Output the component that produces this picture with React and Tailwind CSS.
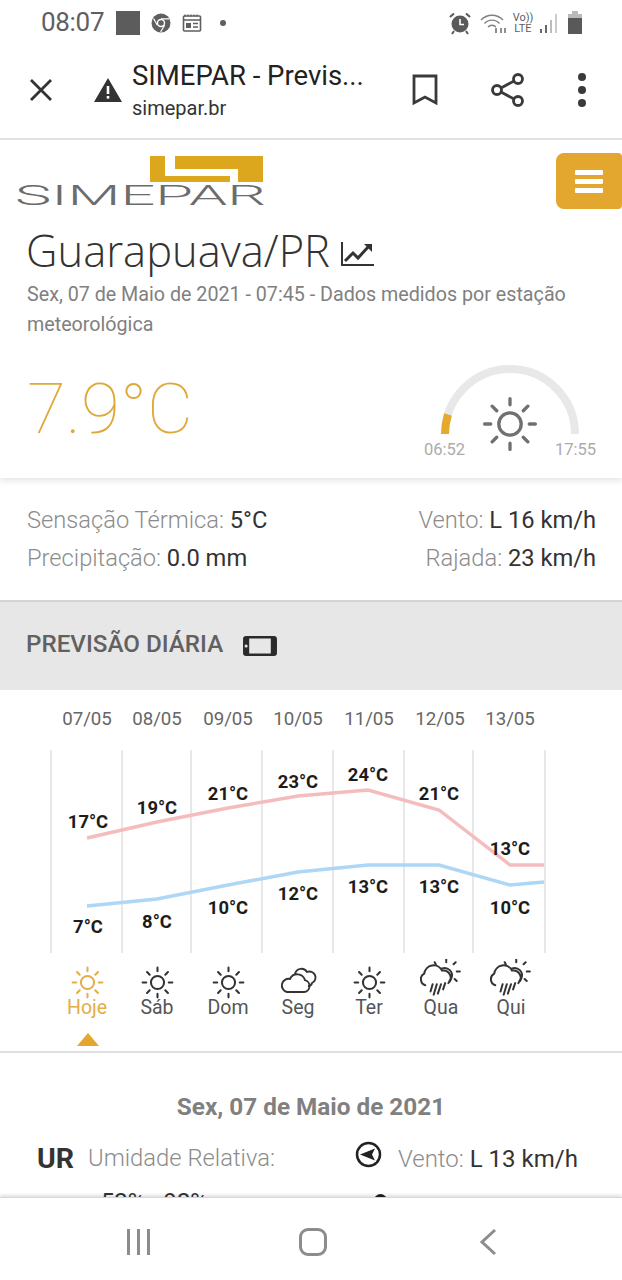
import React from 'react';

const days = [
  { d: '07/05', l: 'Hoje', icon: 'sun', x: 87 },
  { d: '08/05', l: 'Sáb', icon: 'sun', x: 157 },
  { d: '09/05', l: 'Dom', icon: 'sun', x: 228 },
  { d: '10/05', l: 'Seg', icon: 'cloud', x: 298 },
  { d: '11/05', l: 'Ter', icon: 'sun', x: 369 },
  { d: '12/05', l: 'Qua', icon: 'rain', x: 440 },
  { d: '13/05', l: 'Qui', icon: 'rain', x: 510 },
];

const highs = [
  ['17°C', 88, 828], ['19°C', 157, 814], ['21°C', 228, 800], ['23°C', 298, 788],
  ['24°C', 368, 781], ['21°C', 439, 800], ['13°C', 510, 855],
];
const lows = [
  ['7°C', 88, 933], ['8°C', 157, 928], ['10°C', 228, 914], ['12°C', 298, 900],
  ['13°C', 368, 893], ['13°C', 439, 893], ['10°C', 510, 914],
];

function Sun({ size = 41, color = '#333', stroke = 2, className = '' }) {
  return (
    <svg className={className} width={size} height={size} viewBox="0 0 40 40" fill="none" stroke={color} strokeWidth={stroke} strokeLinecap="round">
      <circle cx="20" cy="20" r="6.4" />
      <path d="M20 5.5v3.5M20 31v3.5M5.5 20H9M31 20h3.5M9.8 9.8l2.6 2.6M27.6 27.6l2.6 2.6M30.2 9.8l-2.6 2.6M12.4 27.6l-2.6 2.6" />
    </svg>
  );
}

function Cloud() {
  return (
    <svg className="translate-y-[2px]" width="40" height="40" viewBox="0 0 40 40" fill="none" stroke="#333" strokeWidth="1.9" strokeLinejoin="round">
      <path d="M9 31h17a6 6 0 0 0 1-11.8A8 8 0 0 0 12 18a6.5 6.5 0 0 0-3 13z" />
      <path d="M17 13a6.5 6.5 0 0 1 12-2a6 6 0 0 1 5 11a4 4 0 0 1-4 3" />
    </svg>
  );
}

function RainSun() {
  return (
    <svg className="translate-y-[1px]" width="44" height="42" viewBox="0 0 42 40" fill="none" stroke="#333" strokeWidth="1.9" strokeLinecap="round">
      <path d="M6 25a6 6 0 0 1-1-11a9 9 0 0 1 17-3a7 7 0 0 1 6 12" />
      <path d="M22 9a7 7 0 0 1 9 9a7 7 0 0 1-2 3" />
      <path d="M26 0v3M35 3l-2 2M39 12h-3M36 21l-2-2M15 3l1 2" />
      <path d="M13 24l-2 7M17 24l-3 10M21 24l-3 9M25 23l-2 6" />
    </svg>
  );
}

function StatusBar() {
  return (
    <div className="h-[45px] flex items-center justify-between pl-[41px] pr-[40px] text-[#5f5f5f]">
      <div className="flex items-center">
        <span className="text-[26px] w-[66px] tracking-[-0.3px]">08:07</span>
        <span className="ml-[9px] w-[24px] h-[24px] bg-[#5c5c5c]" />
        <svg className="ml-[11px]" width="20" height="20" viewBox="0 0 20 20">
          <circle cx="10" cy="10" r="9.5" fill="#5f5f5f" />
          <circle cx="10" cy="10" r="4.2" fill="#fff" />
          <circle cx="10" cy="10" r="2.8" fill="#5f5f5f" />
          <path d="M10 5.8h8M6.4 12.2L2.5 5.5M13.6 12.2L9.6 19" stroke="#fff" strokeWidth="1.2" />
        </svg>
        <svg className="ml-[11px]" width="20" height="20" viewBox="0 0 20 20" fill="none" stroke="#5f5f5f" strokeWidth="1.6">
          <rect x="1.5" y="3" width="17" height="15" rx="1" />
          <path d="M1.5 7h17M3 1.6v2M6 1.6v2M9 1.6v2M12 1.6v2M15 1.6v2" strokeWidth="1.4" />
          <rect x="4" y="10" width="5" height="5" fill="#5f5f5f" stroke="none" />
          <path d="M11 10.5h5M11 14h5" strokeWidth="1.3" />
        </svg>
        <span className="ml-[18px] w-[6px] h-[6px] rounded-full bg-[#5f5f5f]" />
      </div>
      <div className="flex items-center">
        <svg width="24" height="24" viewBox="0 0 24 24">
          <circle cx="12" cy="13" r="8.5" fill="#5a5a5a" />
          <path d="M12 8v5.5h4" stroke="#fff" strokeWidth="1.6" fill="none" />
          <path d="M2 6l4-3.5M22 6l-4-3.5M6 20l-2 3M18 20l2 3" stroke="#5a5a5a" strokeWidth="2" />
        </svg>
        <svg className="ml-[8px]" width="28" height="24" viewBox="0 0 28 24" fill="none" stroke="#808080" strokeWidth="1.4">
          <path d="M1 9a15 15 0 0 1 22 0M4.5 12.5a10 10 0 0 1 15 0M8 16a5.5 5.5 0 0 1 8 0" />
          <path d="M16 17v5M21 22v-5M25 22v-5" stroke="#606060" />
        </svg>
        <div className="ml-[4px] w-[22px] flex flex-col items-center text-[11px] leading-[11px]">
          <span>Vo))</span>
          <span>LTE</span>
        </div>
        <svg className="ml-[5px]" width="20" height="22" viewBox="0 0 20 22">
          <rect x="1" y="17" width="2" height="4" fill="#666" />
          <rect x="6" y="13" width="2" height="8" fill="#666" />
          <rect x="11" y="8" width="2" height="13" fill="#bbb" />
          <rect x="16" y="2" width="2" height="19" fill="#ccc" />
        </svg>
        <svg className="ml-[9px]" width="14" height="24" viewBox="0 0 14 24">
          <rect x="4" y="0" width="6" height="3" fill="#bbb" />
          <rect x="0" y="3" width="14" height="4" fill="#bbb" />
          <rect x="0" y="7" width="14" height="16" fill="#595959" />
        </svg>
      </div>
    </div>
  );
}

function Toolbar() {
  return (
    <div className="h-[95px] flex items-center border-b-2 border-[#e2e2e2] pb-[4px]">
      <svg className="ml-[29px]" width="24" height="24" viewBox="0 0 24 24" fill="none" stroke="#333" strokeWidth="2.8">
        <path d="M2 2l20 20M22 2L2 22" />
      </svg>
      <svg className="ml-[40px]" width="30" height="26" viewBox="0 0 30 26">
        <path d="M15 1L29 25H1z" fill="#333" />
        <rect x="13.7" y="9" width="2.6" height="8" fill="#fff" />
        <rect x="13.7" y="19" width="2.6" height="2.6" fill="#fff" />
      </svg>
      <div className="ml-[9px] w-[252px] whitespace-nowrap">
        <div className="text-[27.5px] leading-[30px] text-[#222] mt-[2px]">SIMEPAR - Previs...</div>
        <div className="text-[20px] leading-[24px] mt-[5px] text-[#333]">simepar.br</div>
      </div>
      <svg className="ml-[28px]" width="26" height="32" viewBox="0 0 26 32" fill="none" stroke="#3a3a3a" strokeWidth="2.8">
        <path d="M2 2h22v27l-11-6l-11 6z" />
      </svg>
      <svg className="ml-[53px]" width="34" height="36" viewBox="0 0 34 36" fill="none" stroke="#3a3a3a" strokeWidth="2.8">
        <circle cx="27" cy="7" r="4.5" />
        <circle cx="6" cy="18" r="4.5" />
        <circle cx="27" cy="29" r="4.5" />
        <path d="M10 16L23 9M10 20l13 7" />
      </svg>
      <div className="ml-[53px] flex flex-col gap-[5px]">
        <span className="w-[8px] h-[8px] rounded-full bg-[#3a3a3a]" />
        <span className="w-[8px] h-[8px] rounded-full bg-[#3a3a3a]" />
        <span className="w-[8px] h-[8px] rounded-full bg-[#3a3a3a]" />
      </div>
    </div>
  );
}

function Logo() {
  return (
    <svg width="250" height="58" viewBox="0 0 250 58">
      <rect x="134" y="2" width="113" height="26" fill="#dca71c" />
      <path d="M149 2h10v13h63v13h-8v-6h-65z" fill="#fff" />
      <text x="-1" y="51" textLength="251" lengthAdjust="spacingAndGlyphs" fontFamily="Roboto, sans-serif" fontWeight="300" fontSize="28" fill="#6c6c6c">SIMEPAR</text>
    </svg>
  );
}

function SunGauge() {
  return (
    <div className="relative w-[175px] h-[100px]">
      <svg width="175" height="100" viewBox="0 0 175 100" fill="none">
        <path d="M23 74A65 65 0 0 1 153 74" stroke="#e8e8e8" strokeWidth="8" />
        <path d="M23 74A65 65 0 0 1 26 54.5" stroke="#e5a92c" strokeWidth="8" />
      </svg>
      <div className="absolute left-[53px] top-[29px]">
        <Sun size={70} color="#707070" stroke={1.9} />
      </div>
      <span className="absolute left-[2px] top-[80px] text-[16.5px] leading-[20px] text-[#ababab]">06:52</span>
      <span className="absolute right-[1px] top-[80px] text-[16.5px] leading-[20px] text-[#ababab]">17:55</span>
    </div>
  );
}

function Chart() {
  const grid = [51, 122, 191, 262, 333, 404, 473, 545];
  return (
    <svg width="622" height="206" viewBox="0 750 622 206" className="block">
      {grid.map((x) => (
        <line key={x} x1={x} x2={x} y1="750" y2="953" stroke="#e0e0e0" strokeWidth="1.5" />
      ))}
      <polyline points="87,838 157,822 228,808 298,796 368,790 439,810 510,865 544,865" fill="none" stroke="#f4bcbc" strokeWidth="3.4" />
      <polyline points="87,906 157,899 228,885 298,872 368,865 439,865 510,885 544,882" fill="none" stroke="#aed6f5" strokeWidth="3.4" />
      {[...highs, ...lows].map(([t, x, y], i) => (
        <text key={i} x={x} y={y} textAnchor="middle" fontFamily="Roboto, sans-serif" fontWeight="700" fontSize="18.4" fill="#1c1c1c">{t}</text>
      ))}
    </svg>
  );
}

export default function App() {
  return (
    <div className="w-[622px] h-[1280px] overflow-hidden bg-white flex flex-col font-['Roboto',sans-serif]">
      <StatusBar />
      <Toolbar />

      <div className="h-[1057px] overflow-hidden">
        <div className="h-[338px] shadow-[0_3px_6px_rgba(0,0,0,0.1)] relative">
          <div className="h-[86px] flex justify-between items-start">
            <div className="ml-[16px] mt-[14px]"><Logo /></div>
            <button className="mt-[13px] w-[66px] h-[56px] bg-[#e3a72f] rounded-l-[8px] rounded-r-[4px] flex flex-col items-center justify-center gap-[4px]">
              <span className="w-[28px] h-[5px] rounded-[1px] bg-white" />
              <span className="w-[28px] h-[5px] rounded-[1px] bg-white" />
              <span className="w-[28px] h-[5px] rounded-[1px] bg-white" />
            </button>
          </div>
          <div className="px-[27px]">
            <div className="flex items-center h-[50px]">
              <h1 className="font-['Open_Sans',sans-serif] font-light text-[43.5px] leading-[50px] text-[#333] -ml-[1px]">Guarapuava/PR</h1>
              <svg className="ml-[11px] mt-[6px]" width="33" height="26" viewBox="0 0 33 26" fill="none" stroke="#333">
                <path d="M1 1v23h32" strokeWidth="2" />
                <path d="M4 20l8-8l5 5l11-12" strokeWidth="3" />
                <path d="M23 3h8v8z" fill="#333" strokeWidth="0" />
              </svg>
            </div>
            <p className="mt-[4px] text-[19.7px] leading-[30px] text-[#808080]">
              Sex, 07 de Maio de 2021 - 07:45 - Dados medidos por estação meteorológica
            </p>
            <div className="flex justify-between items-start">
              <div className="mt-[24px] text-[71px] leading-[90px] font-thin text-[#e0a838]">7.9°C</div>
              <div className="mr-[-2px] mt-[20px]"><SunGauge /></div>
            </div>
          </div>
        </div>

        <div className="h-[122px] pl-[27px] pr-[26px] pt-[23px] text-[23.7px] leading-[38px] font-light text-[#8c8c8c]">
          <div className="flex justify-between">
            <span>Sensação Térmica: <span className="font-normal text-[#333]">5°C</span></span>
            <span>Vento: <span className="font-normal text-[#333]">L 16 km/h</span></span>
          </div>
          <div className="flex justify-between">
            <span>Precipitação: <span className="font-normal text-[#333]">0.0 mm</span></span>
            <span>Rajada: <span className="font-normal text-[#333]">23 km/h</span></span>
          </div>
        </div>

        <div className="h-[90px] bg-[#e7e7e7] border-t-2 border-[#d4d4d4] flex items-center px-[26px]">
          <span className="text-[24.2px] font-medium text-[#616161] mb-[4px]">PREVISÃO DIÁRIA</span>
          <svg className="ml-[19px]" width="36" height="22" viewBox="0 0 35 22" preserveAspectRatio="none">
            <rect x="1" y="1" width="33" height="20" rx="3" fill="#2b2b2b" />
            <rect x="7" y="3.5" width="21" height="15" fill="#e7e7e7" />
            <circle cx="4" cy="11" r="1.5" fill="#e7e7e7" />
          </svg>
        </div>

        <div className="relative h-[60px]">
          {days.map((day) => (
            <span key={day.d} className="absolute top-[17px] -translate-x-1/2 text-[18.7px] leading-[24px] text-[#666]" style={{ left: day.x }}>{day.d}</span>
          ))}
        </div>
        <Chart />

        <div className="relative h-[97px] border-b-2 border-[#e0e0e0]">
          {days.map((day, i) => (
            <div key={day.l} className="absolute top-[5px] flex flex-col items-center w-[60px] -translate-x-1/2" style={{ left: day.x + (day.icon === 'rain' ? 1 : 0) }}>
              <div className="h-[36px] flex items-center justify-center">
                {day.icon === 'sun' && <Sun className="translate-y-[3px]" color={i === 0 ? '#e3ae45' : '#333'} />}
                {day.icon === 'cloud' && <Cloud />}
                {day.icon === 'rain' && <RainSun />}
              </div>
              <span className={`text-[19.5px] leading-[22px] ${i === 0 ? 'text-[#e3ae45]' : 'text-[#555]'}`}>{day.l}</span>
            </div>
          ))}
          <div className="absolute left-[77px] top-[77px] w-0 h-0 border-x-[11px] border-x-transparent border-b-[13px] border-b-[#e3a72f]" />
        </div>

        <div className="pt-[39px] text-center text-[24.3px] leading-[30px] font-bold text-[#808080]">Sex, 07 de Maio de 2021</div>

        <div className="flex mt-[17px] h-[40px] items-center text-[23.8px] font-light text-[#8c8c8c]">
          <span className="ml-[37px] text-[28.5px] font-bold text-[#333] w-[51px]">UR</span>
          <span>Umidade Relativa:</span>
          <svg className="ml-[80px] mb-[10px]" width="27" height="27" viewBox="0 0 27 27" fill="none">
            <circle cx="13.5" cy="13.5" r="11.5" stroke="#222" strokeWidth="2.5" />
            <path d="M5 13.5l15-6l-3 6l3 6z" fill="#222" />
          </svg>
          <span className="ml-[16px] text-[24px]">Vento: <span className="font-normal text-[#333]">L 13 km/h</span></span>
        </div>

        <div className="relative h-[30px] text-[23.8px] leading-[28px] text-[#333]">
          <span className="absolute left-[101px] top-[9px]">52% - 92%</span>
          <span className="absolute left-[374px] top-[15px] w-[13px] h-[13px] rounded-full bg-[#222]" />
        </div>
      </div>

      <div className="h-[83px] pt-[5px] border-t border-[#d8d8d8] shadow-[0_-2px_3px_rgba(0,0,0,0.12)] bg-white relative flex items-center">
        <div className="ml-[127px] flex gap-[7px]">
          <span className="w-[3px] h-[26px] bg-[#8c8c8c]" />
          <span className="w-[3px] h-[26px] bg-[#8c8c8c]" />
          <span className="w-[3px] h-[26px] bg-[#8c8c8c]" />
        </div>
        <div className="ml-[149px] w-[28px] h-[28px] rounded-[9px] border-[3.5px] border-[#8c8c8c]" />
        <svg className="ml-[152px]" width="18" height="28" viewBox="0 0 18 28" fill="none" stroke="#8c8c8c" strokeWidth="3">
          <path d="M16 2L3 14l13 12" />
        </svg>
      </div>
    </div>
  );
}
